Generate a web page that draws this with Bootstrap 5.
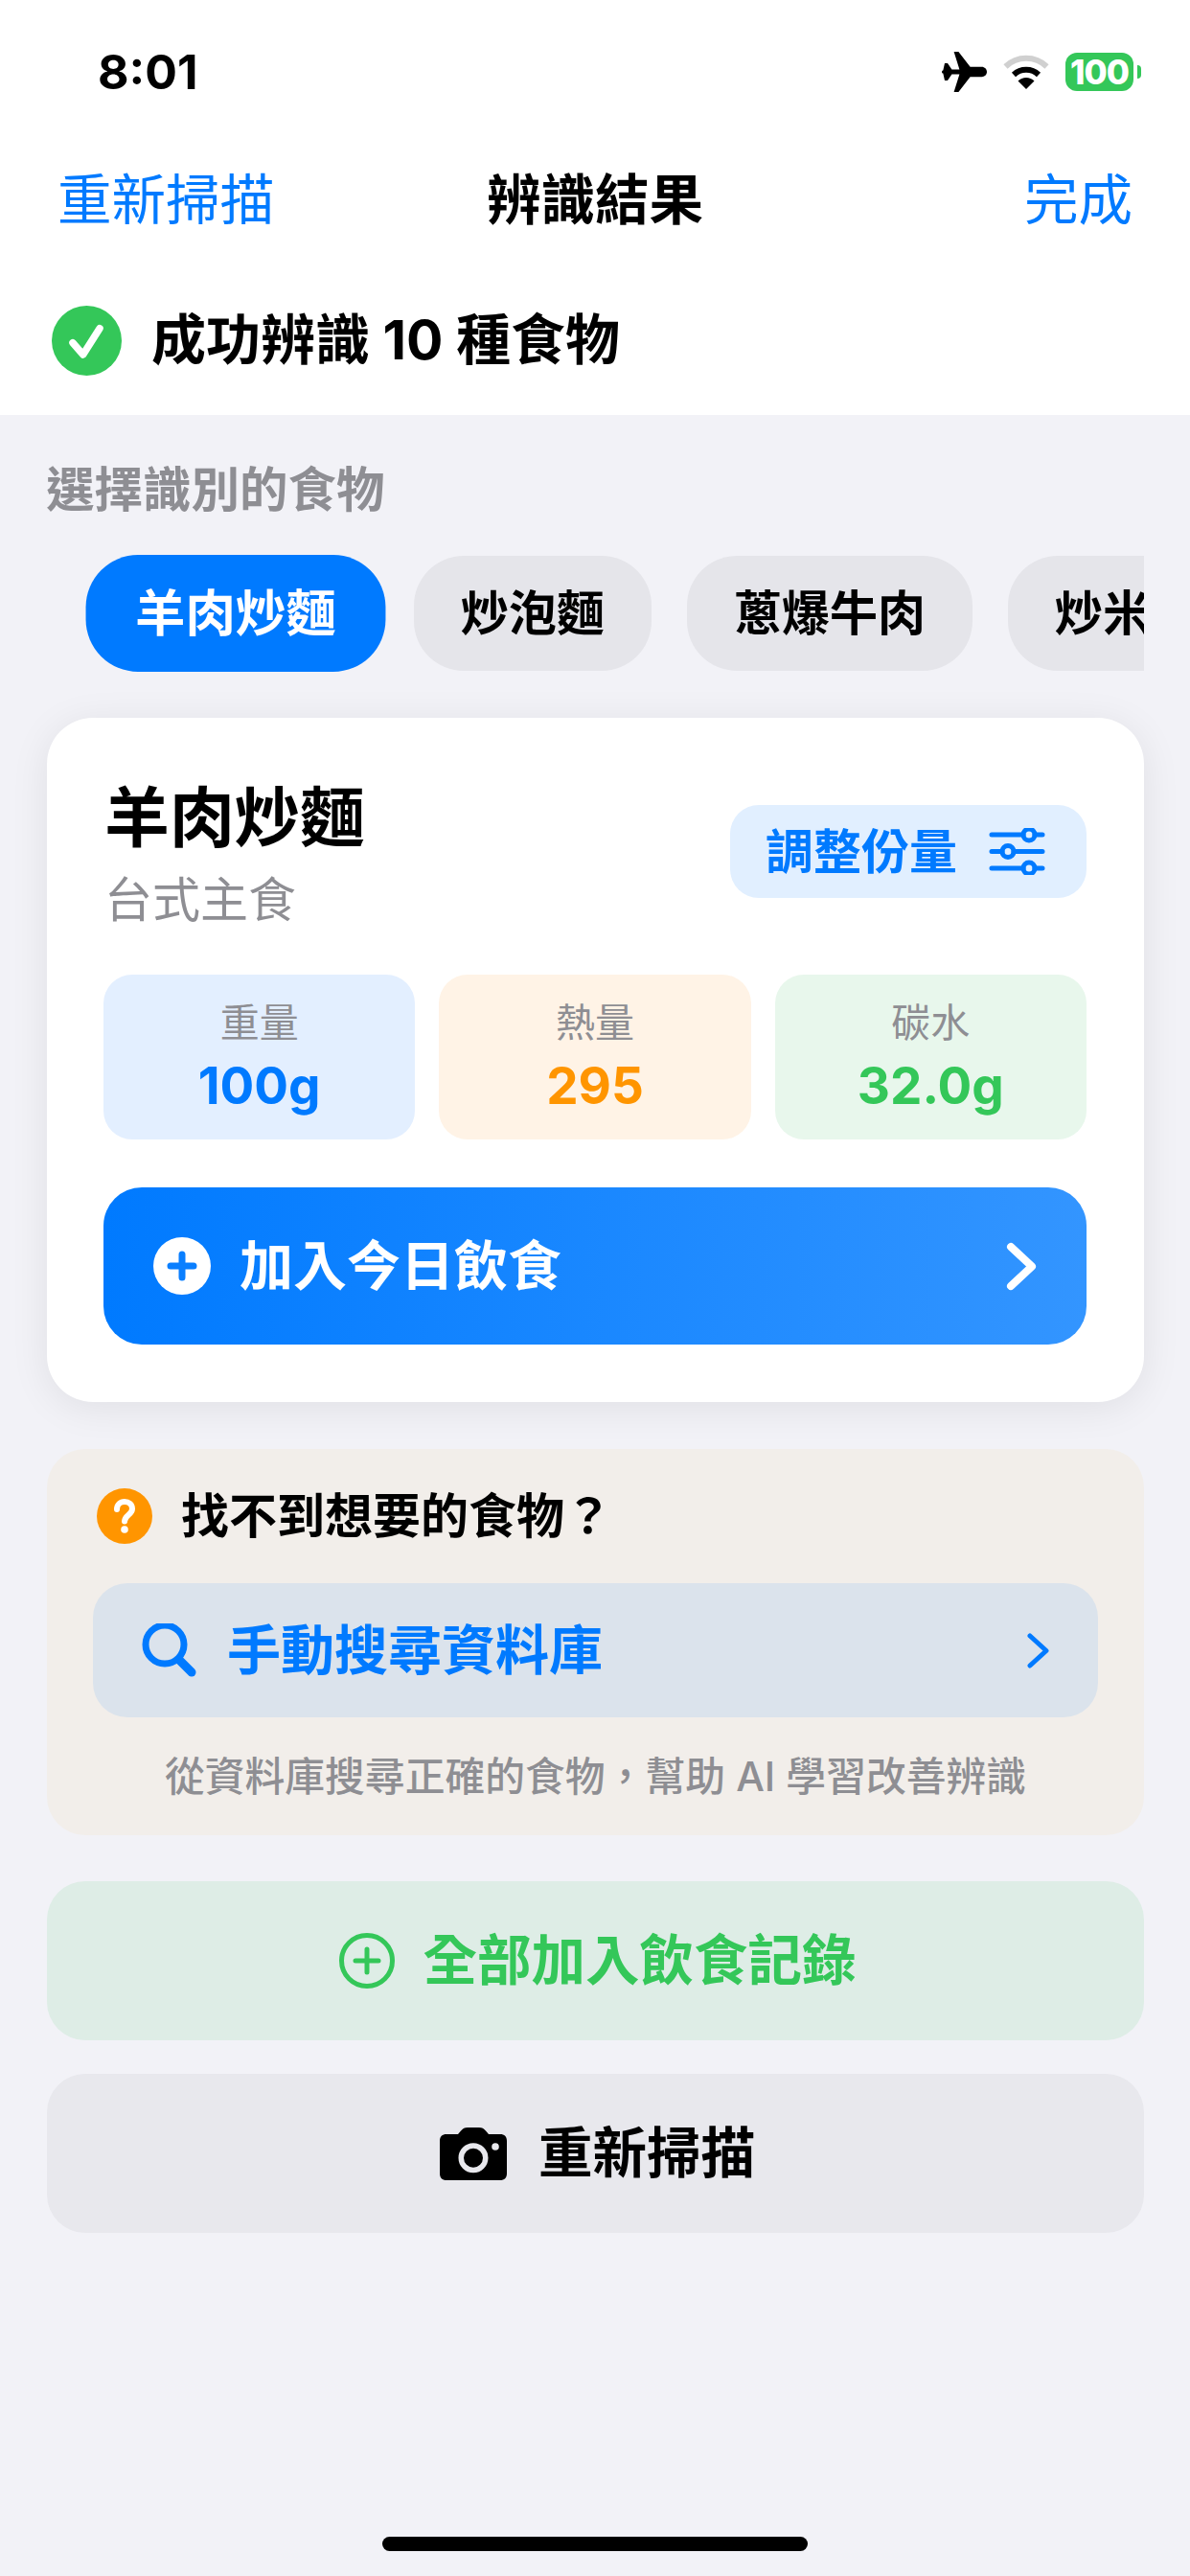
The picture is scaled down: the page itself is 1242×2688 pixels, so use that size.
<!DOCTYPE html>
<html lang="zh-Hant">
<head>
    <meta charset="UTF-8">
    <title>辨識結果</title>
    <link rel="stylesheet" href="https://cdn.jsdelivr.net/npm/bootstrap@5.3.3/dist/css/bootstrap.min.css">
    <style>
        body {
            width: 1242px;
            height: 2688px;
            background: #f2f2f7;
            color: #000;
            font-family: Inter, "Noto Sans CJK TC", sans-serif;
            overflow: hidden;
            position: relative;
        }

        .top-area { height: 433px; background: #fff; }
        .status-row { height: 150px; padding: 0 51px 0 102px; }
        .clock { font-size: 50px; font-weight: 700; line-height: 1; }
        .status-icons { gap: 17px; }
        .battery-box {
            width: 71px; height: 40px; margin-right: 8px;
            background: #34c759; color: #fff; border-radius: 12px;
            font-size: 35px; font-weight: 800; line-height: 40px; text-align: center;
            letter-spacing: -1px; position: relative;
        }
        .battery-box::after {
            content: ""; position: absolute; right: -8px; top: 13px;
            width: 4px; height: 14px; background: #34c759; border-radius: 0 4px 4px 0;
        }

        .nav-row { height: 118px; padding: 0 60px; font-size: 56.500px; line-height: 1; }
        .nav-side { flex: 1 1 0; color: #007aff; }
        .nav-title { font-weight: 700; }
        .success-row { height: 165px; padding: 9px 0 0 54px; gap: 31px; font-size: 57px; font-weight: 700; }

        .main-area { padding: 48px 48px 0 49px; }
        .section-title { font-size: 50.500px; font-weight: 700; line-height: 60px; color: #8e8e93; margin-left: -1px; }

        .pill-strip { margin-top: 31px; padding: 8px 0 8px 48px; gap: 37px; overflow: hidden; align-items: center; }
        .food-pill {
            flex: none; height: 120px; padding: 0 49px; border: 0; border-radius: 52px;
            background: #e5e5ea; color: #000; font-size: 50px; font-weight: 700; line-height: 120px;
        }
        .food-pill.is-active {
            height: 116px; line-height: 116px;
            background: #007aff; color: #fff; transform: scale(1.05);
        }

        .food-card {
            margin-top: 41px; height: 714px; padding: 64px 60px 60px 59px;
            border: 0; border-radius: 48px; background: #fff;
            box-shadow: 0 6px 40px rgba(0, 0, 0, .08);
        }
        .food-name { font-size: 68px; font-weight: 700; line-height: 80px; margin-left: 1px; }
        .food-kind { font-size: 50px; line-height: 60px; margin: 16px 0 0 1px; color: #8e8e93; }
        .adjust-btn {
            width: 372px; height: 97px; padding: 0 43px 0 37px; margin-bottom: 5px;
            border: 0; border-radius: 30px; background: #e1efff; color: #007aff;
            font-size: 50px; font-weight: 700; line-height: 1;
        }

        .stat-row { margin-top: 48px; gap: 25px; }
        .stat-box { flex: 1 1 0; height: 172px; padding-top: 25px; border-radius: 30px; text-align: center; }
        .stat-label { font-size: 41px; line-height: 50px; color: #8e8e93; }
        .stat-value { font-size: 53px; font-weight: 700; line-height: 60px; margin-top: 11px; }
        .tone-blue { background: #e3efff; color: #007aff; }
        .tone-orange { background: #fff3e6; color: #ff9500; }
        .tone-green { background: #e8f7ec; color: #34c759; }

        .add-btn {
            height: 164px; margin-top: 50px; padding: 0 52px 0 52px; gap: 30px;
            border: 0; border-radius: 40px; color: #fff;
            background: linear-gradient(90deg, #007aff, #3395ff);
            font-size: 56px; font-weight: 700; line-height: 1;
        }
        .add-btn:hover { color: #fff; }

        .help-box { margin-top: 49px; height: 403px; padding: 40px 48px 0; border-radius: 40px; background: #f2eeea; }
        .help-title { font-size: 50px; font-weight: 700; line-height: 60px; padding-left: 4px; gap: 30px; }
        .search-btn {
            height: 140px; margin-top: 40px; padding: 0 51px; gap: 32px; width: 100%;
            border: 0; border-radius: 36px; background: #dbe3ec; color: #007aff;
            font-size: 56px; font-weight: 700; line-height: 1;
        }
        .help-note { margin-top: 32px; font-size: 41.800px; font-weight: 500; line-height: 60px; color: #8e8e93; white-space: nowrap; }

        .wide-btn {
            height: 166px; gap: 30px; width: 100%; padding: 0 0 0 4px; border: 0; border-radius: 40px;
            font-size: 56.500px; font-weight: 700; line-height: 1;
        }
        .wide-green { margin-top: 48px; background: #deede6; color: #34c759; }
        .wide-gray { margin-top: 35px; background: #e8e8ed; color: #000; gap: 33px; }

        .home-bar { left: 399px; bottom: 26px; width: 444px; height: 15px; border-radius: 8px; background: #000; }
    </style>
</head>
<body>
    <div class="top-area">
        <div class="status-row d-flex justify-content-between align-items-center">
            <span class="clock">8:01</span>
            <div class="status-icons d-flex align-items-center">
                <svg width="47" height="42" viewBox="0 0 47 42"><path fill="#000" d="M0 21c0-1 .6-1.6 1.300-1.600L3 12h3l4.400 6.600 8 0L12.600 0h4.800l12.200 15.800h12c3 0 5.400 2.300 5.400 5.200s-2.400 5.200-5.400 5.200h-12L17.400 42h-4.800l5.800-18.600-8 0L6 30H3l-1.700-7.400C.6 22.600 0 22 0 21z"/></svg>
                <svg width="48" height="36" viewBox="0 0 48 36"><path fill="none" stroke="#d0d0d0" stroke-width="6" d="M2.500 12.500a31 31 0 0 1 43 0"/><path fill="none" stroke="#000" stroke-width="6" d="M11 21a19 19 0 0 1 26 0"/><path fill="#000" d="M24 36l-8.500-8.500a12 12 0 0 1 17 0z"/></svg>
                <div class="battery-box">100</div>
            </div>
        </div>
        <div class="nav-row d-flex align-items-center">
            <span class="nav-side">重新掃描</span>
            <span class="nav-title">辨識結果</span>
            <span class="nav-side text-end">完成</span>
        </div>
        <div class="success-row d-flex align-items-center">
            <svg width="73" height="73" viewBox="0 0 73 73"><circle cx="36.500" cy="36.500" r="36.500" fill="#34c759"/><path fill="none" stroke="#fff" stroke-width="7.500" stroke-linecap="round" stroke-linejoin="round" d="M22 38.700L32.700 51 50 23.700"/></svg>
            <span>成功辨識 10 種食物</span>
        </div>
    </div>

    <div class="main-area">
        <div class="section-title">選擇識別的食物</div>
        <div class="pill-strip d-flex">
            <div class="food-pill is-active">羊肉炒麵</div>
            <div class="food-pill">炒泡麵</div>
            <div class="food-pill">蔥爆牛肉</div>
            <div class="food-pill">炒米粉</div>
        </div>

        <div class="card food-card">
            <div class="d-flex justify-content-between align-items-center">
                <div>
                    <div class="food-name">羊肉炒麵</div>
                    <div class="food-kind">台式主食</div>
                </div>
                <button type="button" class="btn adjust-btn d-flex justify-content-between align-items-center">
                    <span>調整份量</span>
                    <svg width="59" height="49" viewBox="0 0 59 49"><g fill="none" stroke="#007aff" stroke-width="5" stroke-linecap="round"><path d="M3 7h33M48 7h8M3 24.500h11M26 24.500h30M3 42h33M48 42h8"/><circle cx="42" cy="7" r="6"/><circle cx="20" cy="24.500" r="6"/><circle cx="42" cy="42" r="6"/></g></svg>
                </button>
            </div>

            <div class="stat-row d-flex">
                <div class="stat-box tone-blue"><div class="stat-label">重量</div><div class="stat-value">100g</div></div>
                <div class="stat-box tone-orange"><div class="stat-label">熱量</div><div class="stat-value">295</div></div>
                <div class="stat-box tone-green"><div class="stat-label">碳水</div><div class="stat-value">32.0g</div></div>
            </div>

            <button type="button" class="btn add-btn d-flex align-items-center w-100">
                <svg width="60" height="60" viewBox="0 0 60 60"><circle cx="30" cy="30" r="30" fill="#fff"/><path fill="none" stroke="#0a7fff" stroke-width="7" stroke-linecap="round" d="M30 18v24M18 30h24"/></svg>
                <span>加入今日飲食</span>
                <svg class="ms-auto" width="32" height="51" viewBox="0 0 32 51"><path fill="none" stroke="#fff" stroke-width="8" stroke-linecap="round" stroke-linejoin="round" d="M5 5l22 20.500L5 46"/></svg>
            </button>
        </div>

        <div class="help-box">
            <div class="help-title d-flex align-items-center">
                <svg width="58" height="58" viewBox="0 0 58 58"><circle cx="29" cy="29" r="29" fill="#ff9500"/><path fill="none" stroke="#fff" stroke-width="6" stroke-linecap="round" d="M21 22c0-5 3.500-8 8-8s8 3 8 7.500c0 6-8 6.500-8 13"/><circle cx="29" cy="43" r="3.800" fill="#fff"/></svg>
                <span>找不到想要的食物？</span>
            </div>
            <button type="button" class="btn search-btn d-flex align-items-center">
                <svg width="57" height="56" viewBox="0 0 57 56"><g fill="none" stroke="#007aff" stroke-width="7" stroke-linecap="round"><circle cx="24" cy="22" r="20"/><path stroke-width="9" d="M39 38l13 13"/></g></svg>
                <span>手動搜尋資料庫</span>
                <svg class="ms-auto" width="23" height="37" viewBox="0 0 23 37"><path fill="none" stroke="#007aff" stroke-width="5" stroke-linecap="round" stroke-linejoin="round" d="M3 3l17 15.500L3 34"/></svg>
            </button>
            <div class="help-note text-center">從資料庫搜尋正確的食物，幫助 AI 學習改善辨識</div>
        </div>

        <button type="button" class="btn wide-btn wide-green d-flex justify-content-center align-items-center">
            <svg width="58" height="58" viewBox="0 0 58 58"><g fill="none" stroke="#34c759" stroke-width="5" stroke-linecap="round"><circle cx="29" cy="29" r="26.500"/><path d="M29 17v24M17 29h24"/></g></svg>
            <span>全部加入飲食記錄</span>
        </button>
        <button type="button" class="btn wide-btn wide-gray d-flex justify-content-center align-items-center">
            <svg width="70" height="55" viewBox="0 0 70 55"><path fill="#000" fill-rule="evenodd" d="M7 7h12l3-3.500C24 1 26 0 29 0h12c3 0 5 1 7 3.500L51 7h12c4.500 0 7 2.500 7 7v34c0 4.500-2.500 7-7 7H7c-4.500 0-7-2.500-7-7V14c0-4.500 2.500-7 7-7zm28 9.200a15.500 15.500 0 1 0 0 31 15.500 15.500 0 0 0 0-31zm0 5.500a10 10 0 1 1 0 20 10 10 0 0 1 0-20zM58 16.200a3.800 3.800 0 1 0 0 7.600 3.800 3.800 0 0 0 0-7.600z"/></svg>
            <span>重新掃描</span>
        </button>
    </div>

    <div class="home-bar position-absolute"></div>

    <script src="https://cdn.jsdelivr.net/npm/bootstrap@5.3.3/dist/js/bootstrap.bundle.min.js"></script>
</body>
</html>
